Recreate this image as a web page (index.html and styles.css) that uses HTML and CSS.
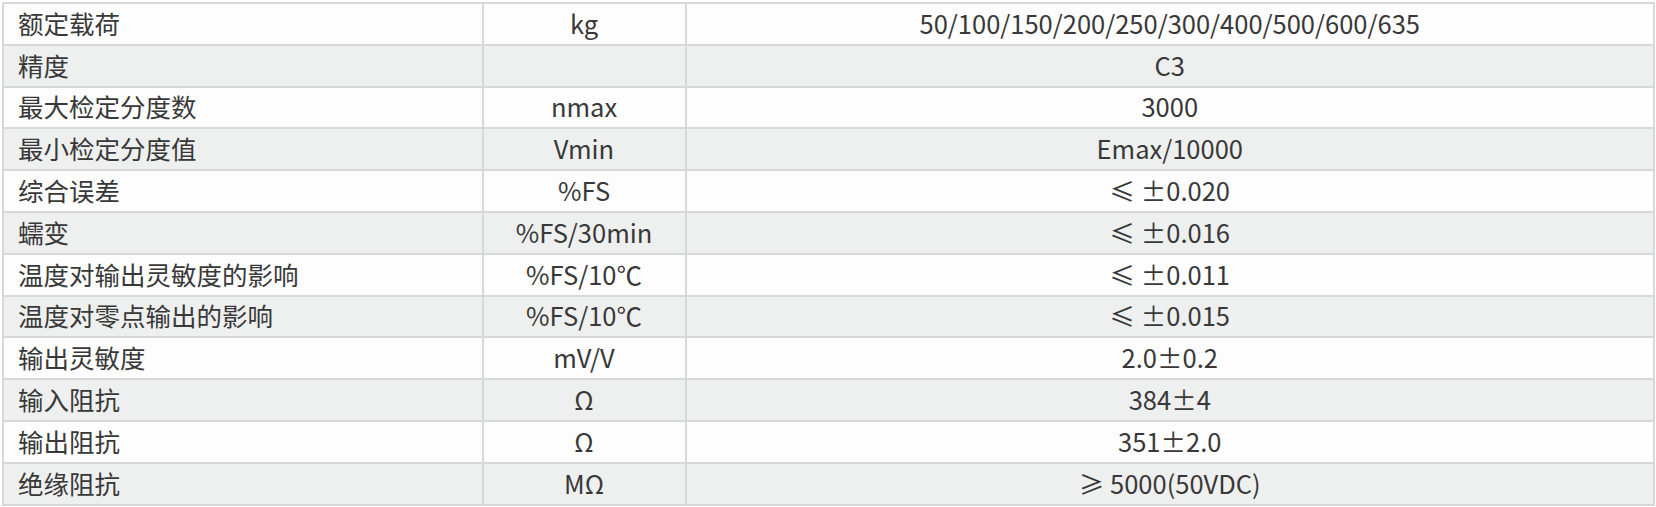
FILE: index.html
```html
<!DOCTYPE html>
<html lang="zh-CN">
<head>
<meta charset="utf-8">
<title>参数表</title>
<link rel="stylesheet" href="styles.css">
</head>
<body>
<table class="spec">
  <colgroup>
    <col class="c-name">
    <col class="c-unit">
    <col class="c-value">
  </colgroup>
  <tbody>
    <tr><td class="name">额定载荷</td><td>kg</td><td>50/100/150/200/250/300/400/500/600/635</td></tr>
    <tr><td class="name">精度</td><td></td><td>C3</td></tr>
    <tr><td class="name">最大检定分度数</td><td>nmax</td><td>3000</td></tr>
    <tr><td class="name">最小检定分度值</td><td>Vmin</td><td>Emax/10000</td></tr>
    <tr><td class="name">综合误差</td><td>%FS</td><td>≤ ±0.020</td></tr>
    <tr><td class="name">蠕变</td><td>%FS/30min</td><td>≤ ±0.016</td></tr>
    <tr><td class="name">温度对输出灵敏度的影响</td><td>%FS/10℃</td><td>≤ ±0.011</td></tr>
    <tr><td class="name">温度对零点输出的影响</td><td>%FS/10℃</td><td>≤ ±0.015</td></tr>
    <tr><td class="name">输出灵敏度</td><td>mV/V</td><td>2.0±0.2</td></tr>
    <tr><td class="name">输入阻抗</td><td>Ω</td><td>384±4</td></tr>
    <tr><td class="name">输出阻抗</td><td>Ω</td><td>351±2.0</td></tr>
    <tr><td class="name">绝缘阻抗</td><td>MΩ</td><td>≥ 5000(50VDC)</td></tr>
  </tbody>
</table>
</body>
</html>
```
FILE: styles.css
```css
html, body {
  margin: 0;
  padding: 0;
  background: #ffffff;
}
body {
  padding: 2px 0 0 2px;
  font-family: "Noto Sans CJK SC", "Noto Sans", sans-serif;
  color: #383838;
}
.spec {
  border-collapse: collapse;
  width: 1651px;
  table-layout: fixed;
  font-size: 25.5px;
}
.c-name { width: 479.5px; }
.c-unit { width: 203px; }
.c-value { width: 968.5px; }
.spec td {
  border: 2px solid #d8d8d8;
  height: 37.3px;
  padding: 0 0 2.5px 0;
  text-align: center;
  vertical-align: middle;
  line-height: 1;
  white-space: nowrap;
}
.spec td.name {
  text-align: left;
  padding-left: 14px;
}
.spec tr:nth-child(odd) td { background: #fdfdfd; }
.spec tr:nth-child(even) td { background: #eef0ef; }
```
